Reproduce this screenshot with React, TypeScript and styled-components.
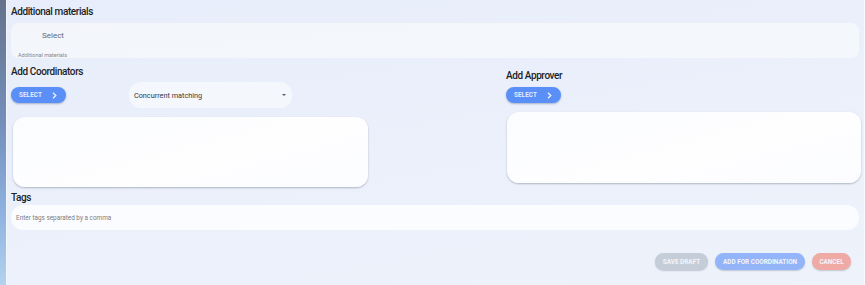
import React from 'react'
import styled, { createGlobalStyle } from 'styled-components'

const GlobalStyle = createGlobalStyle`
  html, body {
    margin: 0;
    padding: 0;
  }
  body {
    font-family: Roboto, "Liberation Sans", Arial, sans-serif;
    background: #eaeffb;
  }
`

const Page = styled.div`
    display: flex;
    width: 865px;
    height: 285px;
    overflow: hidden;
    background: linear-gradient(170deg, #e7edfa 0%, #ebf0fb 55%, #eef2fa 100%);
  `

const SideStrip = styled.div`
    width: 6px;
    flex-shrink: 0;
    background: linear-gradient(180deg, #66728b 0%, #7590bd 45%, #8fb3e0 75%, #b3d2ee 100%);
    border-right: 1px solid #f4f7fd;
  `

const Main = styled.div`
    flex: 1;
    display: flex;
    flex-direction: column;
    padding: 5px 3px 0 4px;
    border-right: 1px solid #f7f9fe;
  `

interface TitleProps {
  offset?: number,
}

const Title = styled.h3<TitleProps>`
    margin: ${props => props.offset || 0}px 0 0 0;
    height: 14px;
    line-height: 14px;
    font-size: 10px;
    font-weight: 500;
    letter-spacing: -0.4px;
    color: #1c1f26;
  `

const MaterialsInput = styled.div`
    position: relative;
    margin-top: 4px;
    margin-right: 2px;
    height: 35px;
    border-radius: 8px;
    background: linear-gradient(175deg, #f3f5fb 0%, #f4f8fc 100%);
  `

const Placeholder = styled.span`
    position: absolute;
    left: 31px;
    top: 8px;
    font-size: 8px;
    color: #66696f;
  `

const HelperText = styled.span`
    position: absolute;
    left: 7px;
    bottom: 0;
    font-size: 5.5px;
    color: #85878d;
  `

const Columns = styled.div`
    display: flex;
    justify-content: space-between;
    margin-top: 7px;
  `

interface ColumnProps {
  width: number,
}

const Column = styled.div<ColumnProps>`
    display: flex;
    flex-direction: column;
    width: ${props => props.width}px;
  `

interface RowProps {
  tall: number,
  top: number,
}

const ControlRow = styled.div<RowProps>`
    display: flex;
    align-items: center;
    height: ${props => props.tall}px;
    margin-top: ${props => props.top}px;
  `

const SelectButton = styled.button`
    display: flex;
    align-items: center;
    gap: 10px;
    height: 16px;
    padding: 0 9px 0 8px;
    border: none;
    border-radius: 8px;
    background: #5b8ff8;
    box-shadow: 0 1px 2px rgba(40, 60, 110, 0.35);
    color: #e4ecff;
    font-family: Roboto, "Liberation Sans", sans-serif;
    font-size: 6.3px;
    font-weight: 700;
    letter-spacing: 0.1px;
    cursor: pointer;
  `

const Dropdown = styled.div`
    display: flex;
    align-items: center;
    justify-content: space-between;
    margin-left: 63px;
    width: 163px;
    height: 26px;
    padding: 0 5px;
    box-sizing: border-box;
    border-radius: 12px;
    background: #f4f7fc;
    font-size: 7.3px;
    color: #34373d;
  `

const Caret = styled.span`
    width: 0;
    height: 0;
    border-left: 2px solid transparent;
    border-right: 2px solid transparent;
    border-top: 2.5px solid #555a62;
    margin-right: 1px;
  `

interface BoxProps {
  top: number,
  tall: number,
  inset?: number,
}

const ListBox = styled.div<BoxProps>`
    margin-top: ${props => props.top}px;
    margin-left: ${props => props.inset || 0}px;
    height: ${props => props.tall}px;
    border-radius: 12px;
    background: linear-gradient(165deg, #fbfcfe 0%, #fefeff 60%, #fbfcff 100%);
    box-shadow: 0 1px 2px rgba(60, 70, 90, 0.35);
  `

const TagsInput = styled.div`
    display: flex;
    align-items: center;
    height: 25px;
    margin-right: 2px;
    padding-left: 5px;
    border-radius: 12px;
    background: #fafcff;
    font-size: 6.4px;
    color: #7a7d85;
  `

const Actions = styled.div`
    display: flex;
    justify-content: flex-end;
    gap: 7px;
    margin-top: 23px;
    margin-right: 10px;
  `

interface ActionProps {
  tone: string,
  width: number,
}

const ActionButton = styled.button<ActionProps>`
    width: ${props => props.width}px;
    height: 17px;
    padding: 0;
    border: none;
    border-radius: 9px;
    background: ${props => props.tone};
    box-shadow: 0 1px 1.5px rgba(60, 70, 90, 0.25);
    color: #f2f5fb;
    font-family: Roboto, "Liberation Sans", sans-serif;
    font-size: 6.4px;
    font-weight: 700;
    cursor: pointer;
  `

function Chevron() {
  return (
    <svg width="5" height="7" viewBox="0 0 5 7">
      <path d="M1 0.8 L3.8 3.5 L1 6.2" stroke="#eef3ff" strokeWidth="1.3" fill="none" />
    </svg>
  )
}

export default function App() {
  return (
    <>
      <GlobalStyle />
      <Page>
        <SideStrip />
        <Main>
          <Title>Additional materials</Title>
          <MaterialsInput>
            <Placeholder>Select</Placeholder>
            <HelperText>Additional materials</HelperText>
          </MaterialsInput>

          <Columns>
            <Column width={357}>
              <Title>Add Coordinators</Title>
              <ControlRow tall={26} top={3}>
                <SelectButton>SELECT <Chevron /></SelectButton>
                <Dropdown>
                  Concurrent matching
                  <Caret />
                </Dropdown>
              </ControlRow>
              <ListBox top={9} tall={70} inset={2} />
            </Column>

            <Column width={355}>
              <Title offset={4}>Add Approver</Title>
              <ControlRow tall={16} top={4}>
                <SelectButton>SELECT <Chevron /></SelectButton>
              </ControlRow>
              <ListBox top={9} tall={71} inset={1} />
            </Column>
          </Columns>

          <Title offset={4}>Tags</Title>
          <TagsInput>Enter tags separated by a comma</TagsInput>

          <Actions>
            <ActionButton tone="#c5ced8" width={53}>SAVE DRAFT</ActionButton>
            <ActionButton tone="#93b4f8" width={90}>ADD FOR COORDINATION</ActionButton>
            <ActionButton tone="#f0aaa6" width={39}>CANCEL</ActionButton>
          </Actions>
        </Main>
      </Page>
    </>
  )
}
